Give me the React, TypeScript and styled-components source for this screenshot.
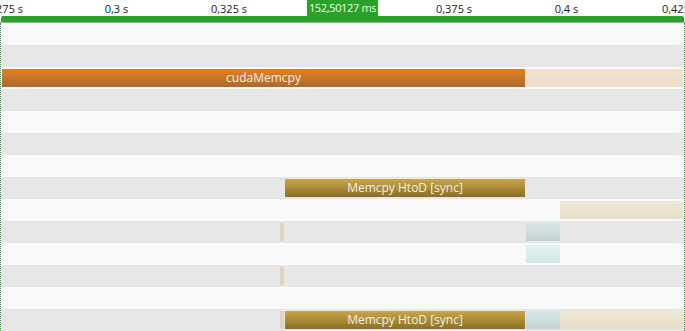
import React from "react";
import styled, { createGlobalStyle } from "styled-components";

const GlobalStyle = createGlobalStyle`
  html, body {
    margin: 0;
    padding: 0;
    background: #ffffff;
    overflow: hidden;
  }
  body {
    font-family: "Open Sans", "Noto Sans", "Liberation Sans", sans-serif;
  }
`;

type Kind = "api" | "apiTail" | "copy" | "sand" | "tick" | "teal" | "tealLight";

interface Span {
  kind: Kind;
  from: number;
  to: number;
  label?: string;
}

const fills: Record<Kind, string> = {
  api: "linear-gradient(#e1801f, #ac6a2f)",
  apiTail: "linear-gradient(#f2e2d3, #eddccb)",
  copy: "linear-gradient(#c9a646, #8b6f27)",
  sand: "linear-gradient(#efe7d8, #e6ddca)",
  tick: "#ddd5c2",
  teal: "linear-gradient(#d3e6e6, #c3d3d3)",
  tealLight: "linear-gradient(#e1f3f1, #d5e7e5)",
};

const rows: Span[][] = [
  [],
  [],
  [
    { kind: "api", from: 2, to: 525, label: "cudaMemcpy" },
    { kind: "apiTail", from: 525, to: 683 },
  ],
  [],
  [],
  [],
  [],
  [{ kind: "copy", from: 285, to: 525, label: "Memcpy HtoD [sync]" }],
  [{ kind: "sand", from: 560, to: 683 }],
  [
    { kind: "tick", from: 280, to: 284 },
    { kind: "teal", from: 526, to: 560 },
  ],
  [{ kind: "tealLight", from: 526, to: 560 }],
  [{ kind: "tick", from: 280, to: 284 }],
  [],
  [
    { kind: "tick", from: 280, to: 284 },
    { kind: "copy", from: 285, to: 525, label: "Memcpy HtoD [sync]" },
    { kind: "teal", from: 526, to: 560 },
    { kind: "sand", from: 560, to: 683 },
  ],
];

const ticks = [
  { label: "0,275 s", at: 5 },
  { label: "0,3 s", at: 116.5 },
  { label: "0,325 s", at: 229 },
  { label: "0,375 s", at: 454 },
  { label: "0,4 s", at: 566.5 },
  { label: "0,425 s", at: 680 },
];

const Page = styled.div`
  width: 685px;
  height: 331px;
  display: flex;
  flex-direction: column;
  overflow: hidden;
  position: relative;
`;

const Ruler = styled.div`
  position: relative;
  height: 23px;
  flex: none;
  border-bottom: 1px solid #a8a8a8;
  box-sizing: border-box;
`;

const TickLabel = styled.span`
  position: absolute;
  top: 2px;
  transform: translateX(-50%);
  font-size: 11px;
  line-height: 14px;
  color: #1a1a1a;
  white-space: nowrap;
`;

const Band = styled.div`
  position: absolute;
  left: 1px;
  right: 1px;
  top: 16px;
  height: 6px;
  background: #2aa22a;
  border-radius: 2px 2px 0 0;
`;

const Cursor = styled.div`
  position: absolute;
  left: 307px;
  top: 0;
  width: 71px;
  height: 16px;
  background: #2aa22a;
  color: #e8ffe8;
  font-size: 11px;
  letter-spacing: -0.35px;
  line-height: 15px;
  text-align: center;
  white-space: nowrap;
`;

const Track = styled.div`
  flex: 1;
  display: flex;
  flex-direction: column;
  border-left: 1px dotted #2f9a2f;
  border-right: 1px dotted #2f9a2f;
`;

const Row = styled.div<{ $odd: boolean }>`
  position: relative;
  height: 22px;
  flex: none;
  background: ${(p) => (p.$odd ? "#e7e7e7" : "#f9f9f9")};
`;

const Bar = styled.div<{ $kind: Kind }>`
  position: absolute;
  top: 2px;
  height: 18px;
  background: ${(p) => fills[p.$kind]};
  color: #f4efe6;
  font-size: 12px;
  line-height: 18px;
  text-align: center;
  white-space: nowrap;
  overflow: hidden;
`;

const App = () => {
  return (
    <>
      <GlobalStyle />
      <Page>
        <Ruler>
          {ticks.map((t) => (
            <TickLabel key={t.label} style={{ left: t.at }}>
              {t.label}
            </TickLabel>
          ))}
          <Band />
          <Cursor>152,50127 ms</Cursor>
        </Ruler>
        <Track>
          {rows.map((spans, i) => (
            <Row key={i} $odd={i % 2 === 1}>
              {spans.map((s, j) => (
                <Bar
                  key={j}
                  $kind={s.kind}
                  style={{ left: s.from - 1, width: s.to - s.from }}
                >
                  {s.label}
                </Bar>
              ))}
            </Row>
          ))}
        </Track>
      </Page>
    </>
  );
};

export default App;
